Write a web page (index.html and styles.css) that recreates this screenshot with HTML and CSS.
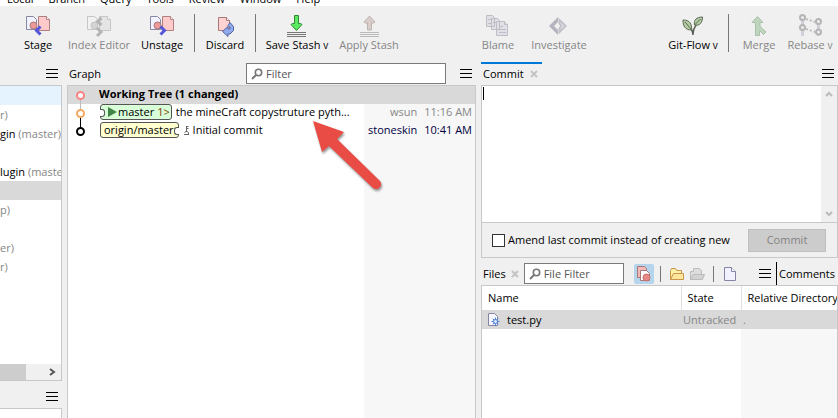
FILE: index.html
```html
<!DOCTYPE html>
<html lang="en">
<head>
<meta charset="utf-8">
<title>Git Client</title>
<link rel="stylesheet" href="styles.css">
</head>
<body>
<svg class="defs" aria-hidden="true">
  <symbol id="lens" viewBox="0 0 12 12"><circle cx="7.5" cy="4.5" r="3.2" fill="none" stroke="#777" stroke-width="1.6"/><path d="M5 7L1 11" stroke="#777" stroke-width="2"/></symbol>
  <symbol id="pages" viewBox="0 0 26 24">
    <path d="M1.5 2.5h7l3 3v10h-10z" fill="#f3f3ff" stroke="#8888a4"/>
    <path d="M13.5 2.5h8l3 3v11h-11z" fill="#ffcaca" stroke="#b08080"/><path d="M21.5 2.5v3h3" fill="#fff" stroke="#b08080"/>
    <circle cx="8.500" cy="11.500" r="3.500" fill="#ee9999" stroke="#a87878"/>
  </symbol>
  <symbol id="burger" viewBox="0 0 12 9"><path d="M0 .5h12M0 4.500h12M0 8.500h12" stroke="#000"/></symbol>
  <symbol id="cross" viewBox="0 0 8 8"><path d="M1 1l6 6M7 1L1 7" stroke="#c4c4c4" stroke-width="2"/></symbol>
</svg>
<div class="app">
  <nav class="menu"><a href="#">Local</a><a href="#">Branch</a><a href="#">Query</a><a href="#">Tools</a><a href="#">Review</a><a href="#">Window</a><a href="#">Help</a></nav>

  <div class="toolbar">
    <button class="tool"><svg width="26" height="24"><use href="#pages"/><path d="M15.500 12.500l-4 4 4 4" fill="none" stroke="#5555dc" stroke-width="3"/></svg>Stage</button>
    <button class="tool wide off" disabled><svg class="gray" width="26" height="24"><use href="#pages"/><path d="M15.500 4l-4 3.500 4 3.500M11 14l4 4-4 4" fill="none" stroke="#5555bc" stroke-width="3"/></svg>Index Editor</button>
    <button class="tool medium"><svg width="26" height="24"><use href="#pages"/><path d="M11.500 12.500l4 4-4 4" fill="none" stroke="#5555dc" stroke-width="3"/></svg>Unstage</button>
    <i class="rule"></i>
    <button class="tool"><svg width="26" height="24"><path d="M6.500 3.500h8l3 3v10h-11z" fill="#ffd2d2" stroke="#a87878"/><path d="M14.500 3.500v3h3" fill="#fff" stroke="#a87878"/><path d="M18 8.500l3.500 4v4l-3.500 3.500h-2v2.500l-5.500-5 5.500-5v2.500h1.500l.5-1.500-2-2z" fill="#92a9ed" stroke="#5065a0"/></svg>Discard</button>
    <i class="rule"></i>
    <button class="tool save"><svg width="26" height="24"><path d="M10.500 1.500h4v8h2l1.500 1-5.500 6-5.500-6 1.500-1h2z" fill="#5ce860" stroke="#318836"/><path d="M3 18.500h19M3 20.500h19M3 22.500h19" stroke="#777"/></svg><span>Save Stash <small>v</small></span></button>
    <button class="tool wide off" disabled><svg width="26" height="24"><path d="M13.500 2l5.500 6-1.500 1h-2v7h-4V9h-2L8 8z" fill="#d8cdc8" stroke="#bdb4b0"/><path d="M4 18.500h19M4 20.500h19M4 22.500h19" stroke="#bbb"/></svg>Apply Stash</button>
    <i class="space"></i>
    <button class="tool off" disabled><svg width="26" height="24"><g fill="#e0e0e6" stroke="#bdbdc6"><path d="M1.500 1.500h6l2 2v9h-8zM6.500 4.500h6l2 2v9h-8zM11.500 7.500h8l3 3v11h-11z"/><path d="M14 12.500h4M14 15.500h7M14 18.500h7M3 5.500h3M8 8.500h3M3 9.500h3M19.500 7.500v3h3"/></g></svg>Blame</button>
    <button class="tool wide off" disabled><svg width="26" height="24"><path d="M12 3l-9 9 9 9v-5l-4-4 4-4z" fill="#b4b4be"/><path d="M13.500 6l6 6-6 6v-3.500l2-2.500-2-2.500z" fill="none" stroke="#c0c0c8" stroke-width="2"/></svg>Investigate</button>
    <i class="space"></i>
    <button class="tool flow"><svg width="26" height="24"><path d="M13 21c0-5-3-8-8-10M13 20c0-6 3-9 8-14" fill="none" stroke="#555c50" stroke-width="1.500"/><path d="M3 6c7 0 9 4 8.500 10C5 16 3 12 3 6z" fill="#b3cba5" stroke="#5d6a55"/><path d="M22.500 3c0 6-3 9-8 8-1-5 2-8 8-8z" fill="#b3cba5" stroke="#5d6a55"/><path d="M5 8l6 7M20.500 5l-6 6" stroke="#5d6a55"/></svg><span>Git-Flow <small>v</small></span></button>
    <i class="rule"></i>
    <button class="tool off" disabled><svg width="26" height="24"><path d="M11.500 2.500l5.500 6h-3v4l6 5.500-2.500 2.500-4-4v5h-4v-13H6z" fill="#bdd6bd" stroke="#aac0aa"/></svg>Merge</button>
    <button class="tool flow off" disabled><svg width="26" height="24"><path d="M5.500 2v20M21.500 7v15" stroke="#d0d0da" stroke-width="3"/><path d="M9 5l9 3M9 15l9 3" stroke="#bbb" stroke-width="2" stroke-dasharray="2"/><g fill="#eee" stroke="#b5b5b5" stroke-width="2"><circle cx="5.500" cy="3.500" r="2.500"/><circle cx="5.500" cy="13.500" r="2.500"/><circle cx="21.500" cy="7.500" r="2.500"/><circle cx="21.500" cy="18" r="2.500"/></g></svg><span>Rebase <small>v</small></span></button>
  </div>

  <main class="views">
    <aside class="side">
      <header class="head end"><button class="icon" aria-label="Repositories menu"><svg width="12" height="9"><use href="#burger"/></svg></button></header>
      <div class="panel flush repos">
        <ul class="tree">
          <li class="hot"></li><li><em>r)</em></li><li>gin <em>(master)</em></li><li></li><li>lugin <em>(master)</em></li>
          <li class="picked"></li><li><em>p)</em></li><li></li><li><em>er)</em></li><li><em>r)</em></li>
        </ul>
        <div class="hscroll"><i></i><svg width="7" height="8"><path d="M1 1l4 3-4 3" fill="none" stroke="#555" stroke-width="2"/></svg></div>
      </div>
      <header class="head end low"><button class="icon" aria-label="Branches menu"><svg width="12" height="9"><use href="#burger"/></svg></button></header>
      <div class="panel flush rest"></div>
    </aside>

    <section class="graph">
      <header class="head">
        <h2>Graph</h2>
        <label class="search"><svg width="12" height="12"><use href="#lens"/></svg><input type="text" placeholder="Filter" aria-label="Filter"></label>
        <button class="icon" aria-label="Graph menu"><svg width="12" height="9"><use href="#burger"/></svg></button>
      </header>
      <div class="panel log">
        <div class="commit picked"><b>Working Tree (1 changed)</b></div>
        <div class="commit">
          <div class="msg"><span class="ref local"><svg width="9" height="12"><path d="M0 1l9 5-9 5z" fill="#3f8546"/></svg>master <i>1&gt;</i></span><span class="text">the mineCraft copystruture pyth...</span></div>
          <div class="meta dim"><span>wsun</span><time>11:16 AM</time></div>
        </div>
        <div class="commit">
          <div class="msg"><span class="ref remote">origin/master</span><svg class="root" width="7" height="11"><path d="M3.500 1v6M3.500 1.500h2M3.500 3.500h2M1 9.500h5M1.500 7.500l2-1.500 2 1.500v2" fill="none" stroke="#666"/></svg><span class="text">Initial commit</span></div>
          <div class="meta"><span>stoneskin</span><time>10:41 AM</time></div>
        </div>
        <div class="commit fill"><div class="msg"></div><div class="meta"></div></div>
        <svg class="nodes" width="24" height="56"><path d="M12.500 13v11" stroke="#bbb"/><path d="M12.500 31v12" stroke="#000"/><g fill="#fff" stroke-width="2"><circle cx="12.500" cy="9.500" r="3.500" stroke="#f78383"/><circle cx="12.500" cy="27.500" r="3.500" stroke="#f4a862"/><circle cx="12.500" cy="45.500" r="3.500" stroke="#000"/></g></svg>
        <svg class="pointer" width="80" height="80"><path d="M5 3l31 11-7 7 43 42a5 5 0 0 1-7 7L21 28l-7 6z" fill="#e94b45"/></svg>
      </div>
    </section>

    <section class="right">
      <header class="head"><h2 class="tab">Commit <svg width="8" height="8"><use href="#cross"/></svg></h2><button class="icon edge" aria-label="Commit menu"><svg width="12" height="9"><use href="#burger"/></svg></button></header>
      <div class="panel editor">
        <div class="entry">
          <textarea aria-label="Commit message"></textarea><i class="caret"></i>
          <div class="vscroll"><svg width="8" height="6"><path d="M1 5l3-3 3 3" fill="none" stroke="#bbb" stroke-width="2"/></svg><svg width="8" height="6"><path d="M1 1l3 3 3-3" fill="none" stroke="#bbb" stroke-width="2"/></svg></div>
        </div>
        <div class="actions"><label><input type="checkbox"><span>Amend last commit instead of creating new</span></label><button class="submit" disabled>Commit</button></div>
      </div>
      <header class="head files">
        <h2>Files <svg width="8" height="8"><use href="#cross"/></svg></h2>
        <label class="search small"><svg width="12" height="12"><use href="#lens"/></svg><input type="text" placeholder="File Filter" aria-label="File Filter"></label>
        <button class="icon on" aria-label="Untracked files"><svg width="16" height="16"><path d="M1.500.5h7l2 2v9h-9z" fill="#f4baba" stroke="#a87878"/><path d="M4.500 4.500h6l3 3v7h-9z" fill="#fff" stroke="#a87878"/><circle cx="10.500" cy="11.500" r="3.500" fill="#e88989" stroke="#c96d6d"/></svg></button>
        <i class="rule"></i>
        <button class="icon" aria-label="Open folder"><svg width="16" height="14"><path d="M1.500 12.500v-9l1-2h4l1 2h5v9z" fill="#fff0a8" stroke="#c8964c"/><path d="M1.500 12.500l3-6h10v6z" fill="#ffe69a" stroke="#c8964c"/></svg></button>
        <button class="icon" disabled aria-label="Folder files"><svg width="16" height="14"><path d="M1.500 12.500v-8h3v-3h6l2 2v9z" fill="#ddd" stroke="#bbb"/><path d="M1.500 12.500l3-5h11l-2 5z" fill="#d3d3d3" stroke="#bbb"/></svg></button>
        <i class="rule"></i>
        <button class="icon" aria-label="New file"><svg width="14" height="16"><path d="M1.500 1.500h7l4 4v9h-11z" fill="#f1f1ff" stroke="#8484a6"/><path d="M8.500 1.500v4h4" fill="#fff" stroke="#8484a6"/></svg></button>
        <button class="icon more" aria-label="Files menu"><svg width="12" height="9"><use href="#burger"/></svg></button>
        <h2 class="next">Comments</h2>
      </header>
      <div class="panel rest list">
        <table>
          <colgroup><col><col class="state"><col class="dir"></colgroup>
          <thead><tr><th>Name</th><th>State</th><th>Relative Directory</th></tr></thead>
          <tbody>
            <tr class="picked"><td><span class="name"><svg width="12" height="13"><path d="M.5.500h6l3 3v9h-9z" fill="#f6f6ff" stroke="#8484a6"/><path d="M7.500 4.500v8M3.500 8.500h8M4.700 5.700l5.600 5.600M10.300 5.700l-5.600 5.600" stroke="#4d82d6"/><circle cx="7.500" cy="8.500" r="2" fill="#d9e8ff" stroke="#4d82d6"/></svg>test.py</span></td><td class="dim">Untracked</td><td class="dim">.</td></tr>
            <tr class="blank"><td></td><td></td><td></td></tr>
          </tbody>
        </table>
      </div>
    </section>
  </main>
</div>
</body>
</html>
```

FILE: styles.css
```css
* { box-sizing: border-box; }
html, body { height: 100%; margin: 0; }
body { background: #f0f0f0; color: #000; font: 11px/18px "Open Sans", "Noto Sans", sans-serif; overflow: hidden; }
button, input, textarea { font: inherit; color: inherit; }
button { border: 0; padding: 0; background: none; }
h2 { margin: 0; font-size: 11px; font-weight: 400; }
svg { flex: none; display: block; }
.defs { position: absolute; width: 0; height: 0; }
.app { display: flex; flex-direction: column; height: 100vh; }

.menu { display: flex; align-items: flex-end; gap: 15px; height: 6px; padding-left: 7px; overflow: hidden; background: #fff; line-height: 14px; flex: none; }
.menu a { color: inherit; text-decoration: none; }

.toolbar { display: flex; align-items: flex-start; height: 56px; padding: 8px 0 0 15px; flex: none; }
.tool { display: flex; flex-direction: column; align-items: center; flex: none; width: 46px; line-height: 14px; white-space: nowrap; }
.tool.medium { width: 50px; }
.tool.flow { width: 56px; }
.tool.save { width: 68px; }
.tool.wide { width: 76px; }
.tool small { font-size: 10px; }
.off, .dim { color: #868686; }
.gray { filter: grayscale(1); opacity: .4; }
.rule { flex: none; width: 1px; height: 38px; margin: 0 7px; background: #777; }
.space { flex: 1; }

.views { display: grid; grid-template-columns: 62px minmax(0, 409fr) minmax(0, 357fr); gap: 5px; flex: 1; min-height: 0; }
.side, .graph, .right { display: flex; flex-direction: column; min-width: 0; min-height: 0; }
.head { display: flex; align-items: center; height: 23px; flex: none; padding: 0 4px 0 2px; }
.end { justify-content: flex-end; }
.low { height: 27px; padding-top: 4px; }
.icon { display: flex; align-items: center; justify-content: center; height: 20px; }
.panel { background: #fff; border: 1px solid #c8c8c8; }
.flush { border-left: 0; }
.rest { flex: 1; min-height: 0; border-bottom: 0; }
.picked { background: #d9d9d9; }

.repos { height: 296px; display: flex; flex-direction: column; flex: none; }
.tree { list-style: none; margin: 0; padding: 0; flex: 1; overflow: hidden; white-space: nowrap; }
.tree li { height: 19px; line-height: 19px; }
.tree em { font-style: normal; color: #868686; }
.hot { background: #e5f3ff; }
.hscroll { display: flex; align-items: center; justify-content: space-between; height: 16px; padding-right: 5px; background: #f0f0f0; }
.hscroll i { width: 26px; height: 16px; background: #cdcdcd; }

.search { display: flex; align-items: center; gap: 3px; width: 200px; height: 21px; margin: 0 14px 0 auto; padding: 0 4px; background: #fff; border: 1px solid #7a7a7a; }
.search input { flex: 1; min-width: 0; border: 0; padding: 0; outline: 0; background: none; }
.search input::placeholder { color: #555; opacity: 1; }
.search.small { width: 100px; margin: 0 10px 0 5px; }

.log { position: relative; flex: 1; display: flex; flex-direction: column; min-height: 0; border-bottom: 0; }
.commit { display: flex; height: 18px; line-height: 16px; flex: none; }
.commit b { padding-left: 31px; font-weight: 700; }
.commit.fill { flex: 1; }
.msg { display: flex; align-items: flex-start; flex: 1; min-width: 0; padding: 0 4px 0 32px; white-space: nowrap; }
.text { overflow: hidden; text-overflow: ellipsis; }
.meta { display: flex; justify-content: flex-end; gap: 7px; width: 111px; padding-right: 3px; background: #f7f7f7; color: #000040; white-space: nowrap; }
.meta.dim { color: #868686; }
.ref { display: flex; align-items: center; height: 16px; border: 1px solid #555; border-radius: 3px; flex: none; line-height: 14px; margin-right: 4px; position: relative; }
.ref i { font-style: normal; color: #804000; margin-left: 2px; }
.local { background: #d8ffd8; padding: 0 1px 0 7px; gap: 1px; }
.remote { background: #ffffd0; padding: 0 4px 0 3px; }
.local::before, .remote::after { content: ""; position: absolute; top: 4px; width: 4px; height: 6px; border: 1px solid #555; background: #fff; }
.local::before { left: -1px; border-left: 0; border-radius: 0 3px 3px 0; }
.remote::after { right: -1px; border-right: 0; border-radius: 3px 0 0 3px; }
.root { margin: 3px 3px 0 0; }
.nodes { position: absolute; top: 0; left: 0; }
.pointer { position: absolute; top: 32px; left: 240px; filter: drop-shadow(1px 2px 1px #0006); }

.tab { display: flex; align-items: center; gap: 6px; height: 23px; margin-left: -2px; padding: 0 4px 0 2px; box-shadow: inset 0 2px #0078d7; }
.edge { margin-left: auto; }
.editor { height: 173px; display: flex; flex-direction: column; flex: none; }
.entry { position: relative; display: flex; flex: 1; min-height: 0; }
.entry textarea { flex: 1; min-width: 0; border: 0; padding: 1px 4px; outline: 0; resize: none; background: #fff; }
.caret { position: absolute; left: 1px; top: 1px; width: 1px; height: 13px; background: #000; }
.vscroll { display: flex; flex-direction: column; justify-content: space-between; align-items: center; width: 16px; padding: 5px 0; background: #f0f0f0; }
.actions { display: flex; align-items: center; gap: 11px; height: 35px; padding: 0 11px 0 10px; background: #f0f0f0; border-top: 1px solid #c8c8c8; }
.actions label { display: flex; align-items: center; gap: 3px; flex: 1; min-width: 0; overflow: hidden; white-space: nowrap; }
.actions label span { overflow: hidden; }
.actions input { appearance: none; flex: none; width: 13px; height: 13px; margin: 0; background: #fff; border: 1px solid #333; }
.submit { width: 78px; height: 23px; background: #ccc; border: 1px solid #bfbfbf; color: #838383; }

.files { height: 27px; padding: 4px 0 0 2px; overflow: hidden; }
.files h2 { display: flex; align-items: center; gap: 5px; flex: none; }
.files .rule { height: 16px; margin: 0 6px; }
.files .icon { flex: none; width: 20px; }
.on { background: #b5d5ec; border-radius: 2px; }
.files .more { margin: 0 1px 0 auto; }
.files .next { height: 23px; padding: 0 3px 0 2px; border-left: 1px solid #000; }
.list { display: flex; overflow: hidden; }
table { width: 100%; height: 100%; table-layout: fixed; border-collapse: collapse; }
.state { width: 60px; }
.dir { width: 96px; }
th, td { padding: 0 6px; text-align: left; font-weight: 400; white-space: nowrap; overflow: hidden; }
th { height: 24px; }
th + th { border-left: 1px solid #e0e0e0; }
th:last-child { padding-right: 0; }
td { height: 19px; }
td + td { padding: 0 2px; }
.name { display: flex; align-items: center; gap: 7px; }
.blank td { height: auto; }
.blank td:last-child { background: #f7f7f7; }
```
